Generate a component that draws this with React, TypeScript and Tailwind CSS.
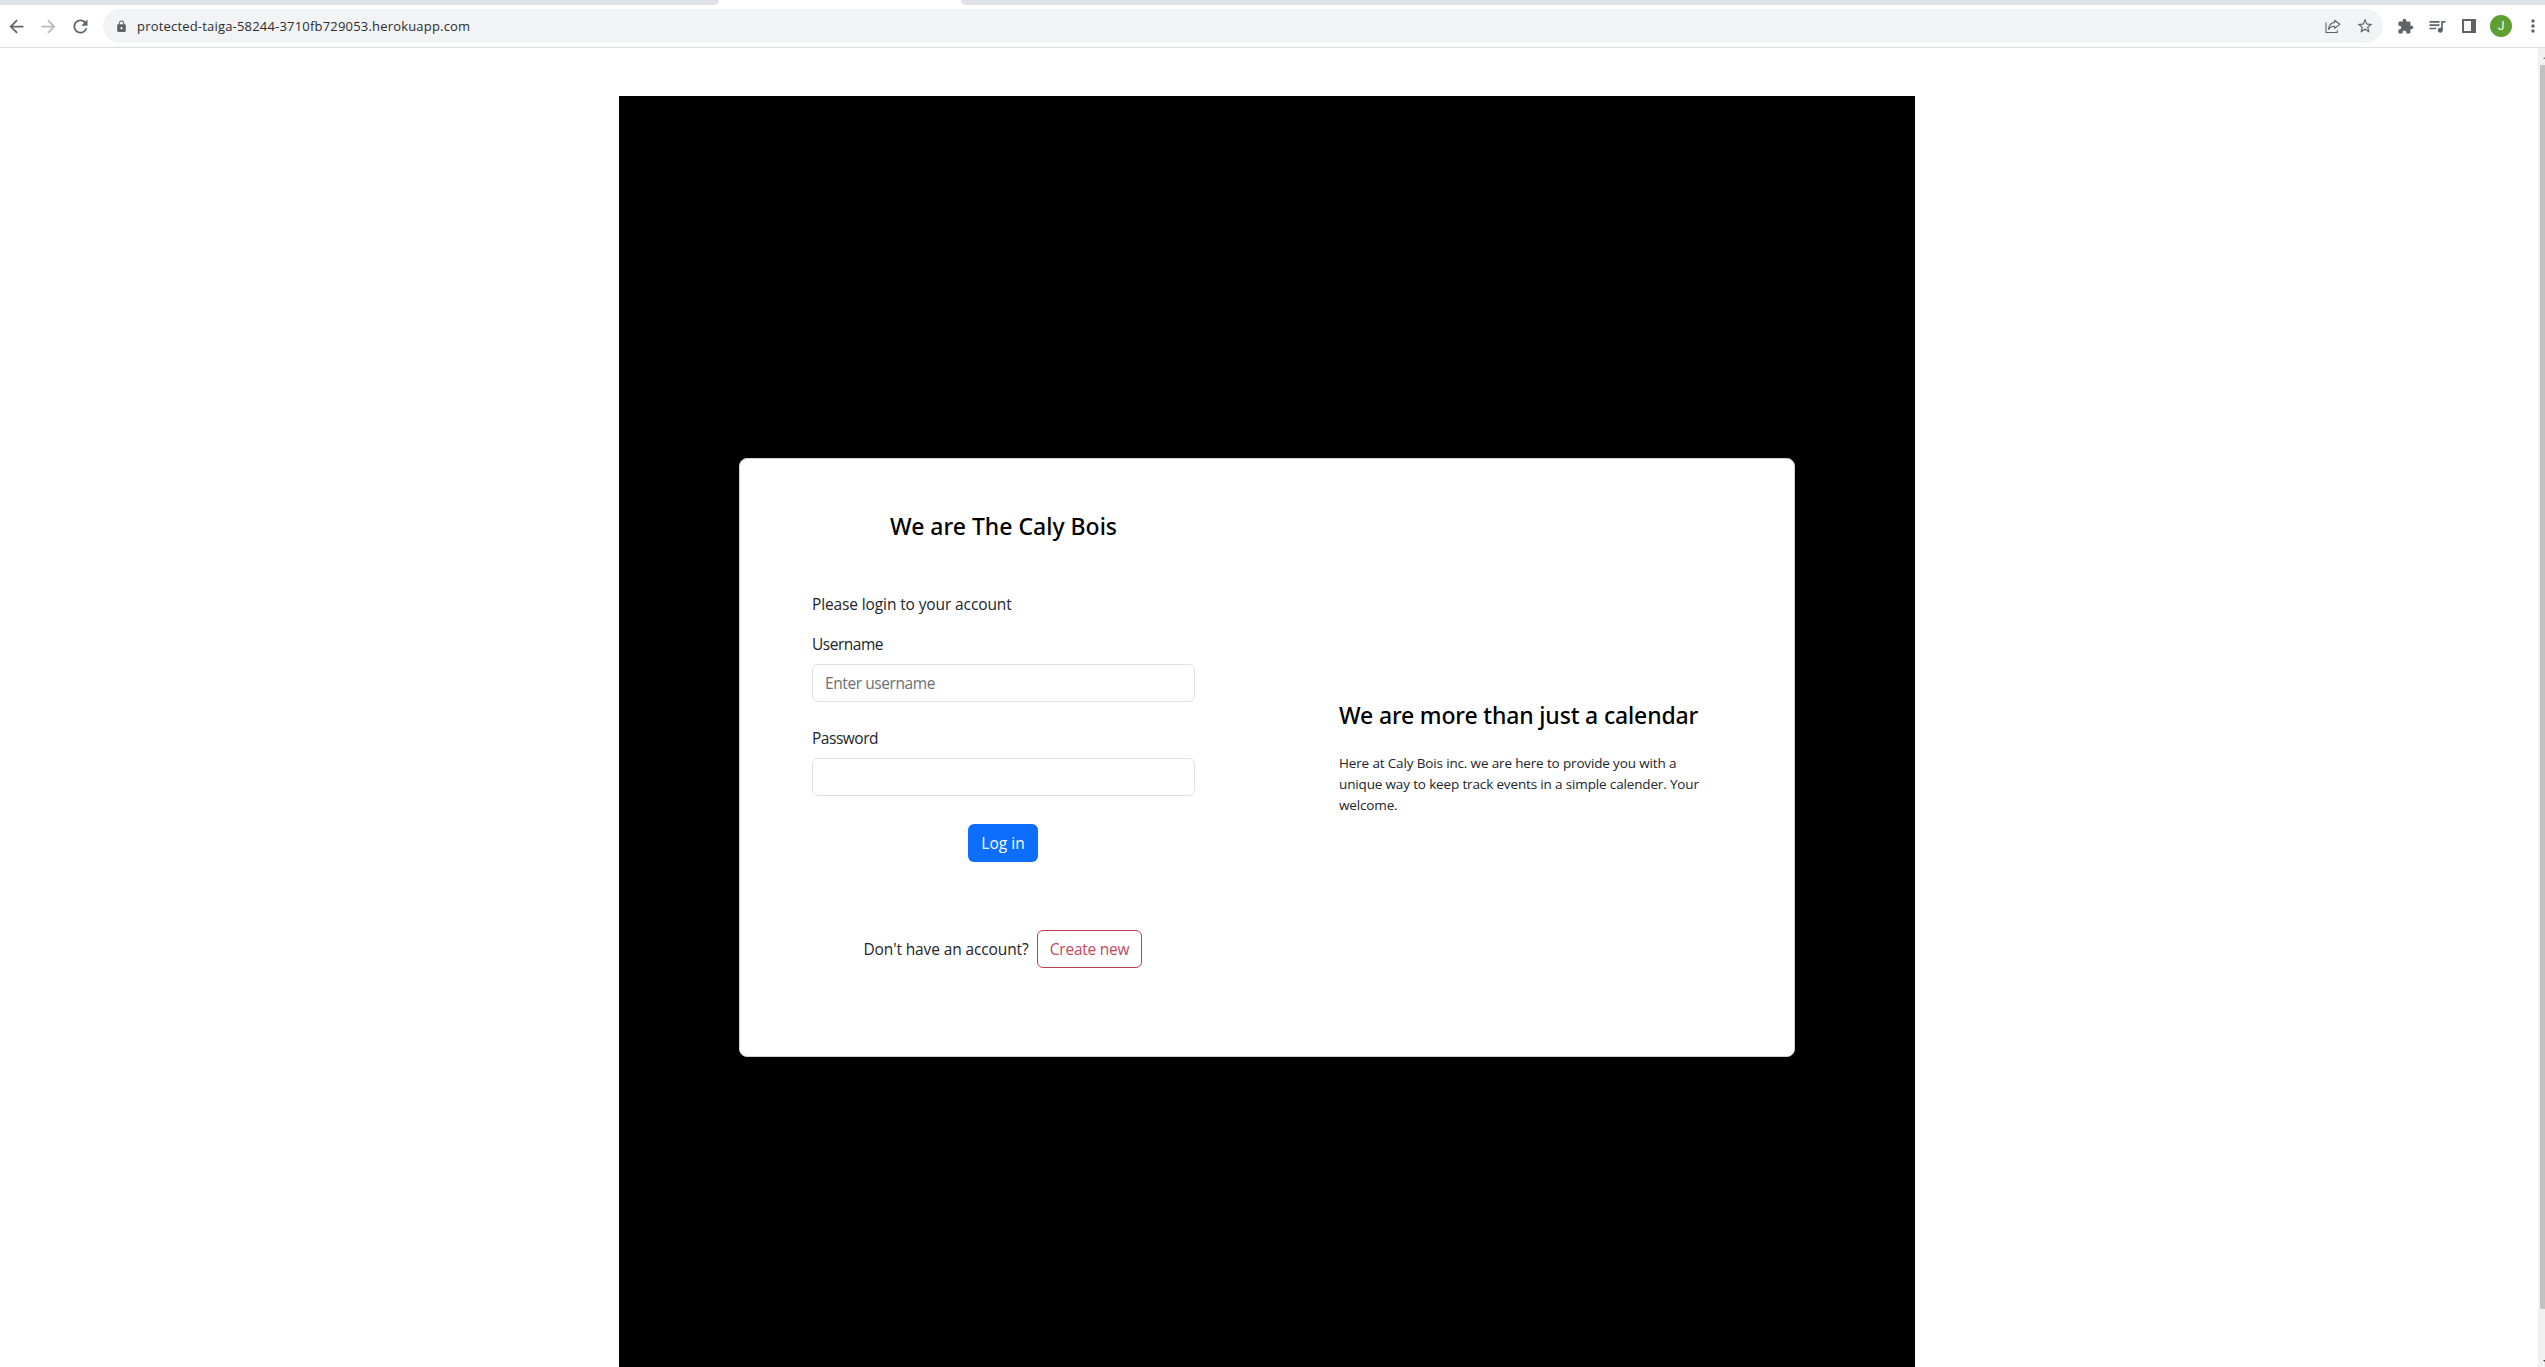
import type { ReactNode } from "react";
import {
  MdArrowBack,
  MdArrowForward,
  MdExtension,
  MdLock,
  MdMoreVert,
  MdQueueMusic,
  MdRefresh,
  MdStarOutline,
} from "react-icons/md";

function Slot({ children }: { children: ReactNode }) {
  return <span className="flex w-8 shrink-0 items-center justify-center">{children}</span>;
}

function ShareIcon() {
  return (
    <svg width="16" height="16" viewBox="0 0 16 16" fill="none" stroke="currentColor" strokeWidth="1.1">
      <path d="M1 4.5V14.5H12.3V12.2" />
      <path d="M9.6 2.2L14.8 6.3L9.6 10.4V8.2C6.6 8 5 9.2 3.4 11.4C3.9 7.6 6 4.8 9.6 4.4Z" strokeLinejoin="round" />
    </svg>
  );
}

function SidePanelIcon() {
  return (
    <span className="flex h-[14px] w-[14px] border-2 border-[#5f6368]">
      <span className="ml-auto h-full w-[3px] bg-[#5f6368]" />
    </span>
  );
}

function TabStrip() {
  return (
    <div className="flex h-[5px] justify-between bg-white">
      <div className="w-[719px] rounded-br-[5px] bg-[#dee1e6]" />
      <div className="w-[1584px] rounded-bl-[5px] bg-[#dee1e6]" />
    </div>
  );
}

function Toolbar() {
  return (
    <div className="flex h-[43px] items-center border-b border-[#dadcdf] bg-white text-[#5f6368]">
      <Slot><MdArrowBack size={21} /></Slot>
      <span className="flex text-[#b9bbbe]"><Slot><MdArrowForward size={21} /></Slot></span>
      <Slot><MdRefresh size={21} /></Slot>
      <div className="ml-[7px] flex h-[34px] flex-1 items-center rounded-full bg-[#f1f3f4] pr-0.5 pl-3">
        <MdLock size={13} />
        <span className="ml-[9px] flex-1 translate-y-px text-[13px] tracking-[0.19px] text-[#2b2d30]">
          protected-taiga-58244-3710fb729053.herokuapp.com
        </span>
        <Slot><ShareIcon /></Slot>
        <Slot><MdStarOutline size={18} /></Slot>
      </div>
      <div className="ml-1.5 flex w-[156px] shrink-0 items-center">
        <Slot><MdExtension size={17} /></Slot>
        <Slot><MdQueueMusic size={20} /></Slot>
        <Slot><SidePanelIcon /></Slot>
        <Slot>
          <span className="flex h-[22px] w-[22px] items-center justify-center rounded-full bg-[#5f9f31] font-['Roboto'] text-[12px] text-white">J</span>
        </Slot>
        <Slot><MdMoreVert size={20} /></Slot>
      </div>
    </div>
  );
}

function Scrollbar() {
  return (
    <div className="flex w-[7px] shrink-0 flex-col overflow-hidden bg-[#f1f1f1] pl-0.5">
      <svg className="h-[17px] w-[5px] shrink-0" viewBox="0 0 5 17" fill="#7f7f7f">
        <path d="M3 11L5 9V11Z" />
      </svg>
      <div className="h-[1244px] bg-[#c1c1c1]" />
      <svg className="mt-auto h-[17px] w-[5px]" viewBox="0 0 5 17" fill="#404040">
        <path d="M3 10H5V12Z" />
      </svg>
    </div>
  );
}

const heading = "font-['Noto_Sans'] text-[23px] leading-[29px] font-medium text-black";
const field =
  "h-[38px] w-full rounded-md border border-[#dee2e6] bg-white px-3 text-[15.5px] tracking-[-0.42px] placeholder:text-[#6c7075] outline-none";

function LoginPane() {
  return (
    <div className="flex w-1/2 flex-col px-[72px] pt-[53px] text-[15.5px] leading-6">
      <h4 className={`${heading} text-center`}>We are The Caly Bois</h4>
      <p className="mt-[51px] tracking-[-0.12px]">Please login to your account</p>
      <label className="mt-4 tracking-[-0.48px]">Username</label>
      <input className={`${field} mt-2`} placeholder="Enter username" />
      <label className="mt-6 tracking-[-0.48px]">Password</label>
      <input className={`${field} mt-2`} type="password" />
      <button className="mt-7 mr-[2px] h-[38px] w-[70px] self-center rounded-md bg-[#0d6efd] pl-px text-white">Log in</button>
      <div className="mt-[68px] flex items-center justify-center pr-[2px]">
        <p className="mr-2 whitespace-nowrap tracking-[-0.12px]">Don't have an account?</p>
        <button className="h-[38px] w-[105px] rounded-md border border-[#c03f53] pl-px tracking-[-0.25px] text-[#c2475a]">
          Create new
        </button>
      </div>
    </div>
  );
}

function AboutPane() {
  return (
    <div className="flex w-1/2 flex-col justify-center pt-[2px] pl-[72px] whitespace-nowrap">
      <h4 className={`${heading} tracking-[-0.16px]`}>We are more than just a calendar</h4>
      <p className="mt-[23px] text-[13.5px] leading-[21px] tracking-[-0.15px]">
        Here at Caly Bois inc. we are here to provide you with a<br />
        unique way to keep track events in a simple calender. Your<br />
        welcome.
      </p>
    </div>
  );
}

export default function App() {
  return (
    <div className="flex h-[1367px] w-[2545px] flex-col overflow-hidden bg-white font-['Open_Sans','Noto_Sans',sans-serif] text-[#212529]">
      <TabStrip />
      <Toolbar />
      <div className="flex min-h-0 flex-1">
        <main className="flex flex-1 pt-12 pl-[619px]">
          <section className="w-[1296px] bg-black px-[120px] pt-[362px]">
            <div className="flex h-[599px] w-[1056px] rounded-lg border border-[#d0d0d0] bg-white">
              <LoginPane />
              <AboutPane />
            </div>
          </section>
        </main>
        <Scrollbar />
      </div>
    </div>
  );
}
